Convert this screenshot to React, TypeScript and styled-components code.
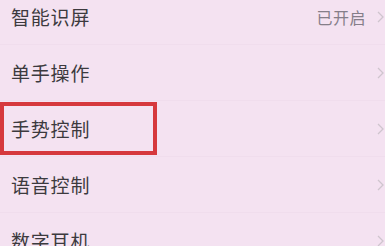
import React from "react";
import styled, { createGlobalStyle } from "styled-components";

const Global = createGlobalStyle`
  html, body { margin: 0; padding: 0; background: #f4e2f1; }
  body { font-family: "Noto Sans CJK SC", "Noto Sans", sans-serif; overflow: hidden; }
`;

const Page = styled.div`
  width: 385px;
  height: 246px;
  overflow: hidden;
  background: #f4e2f1;
`;

const List = styled.ul`
  list-style: none;
  margin: -11px 0 0 0;
  padding: 0;
`;

const Row = styled.li`
  height: 56px;
  display: flex;
  align-items: center;
  padding: 0 0 0 11px;
  box-sizing: border-box;
  border-bottom: 1px solid rgba(210, 190, 210, 0.12);
`;

const Title = styled.span<{ $marked?: boolean }>`
  font-size: 19px;
  color: #3c3a3e;
  letter-spacing: 0.8px;
  display: flex;
  align-items: center;
  box-sizing: border-box;
  ${(p) =>
    p.$marked
      ? `
    margin-left: -11px;
    padding-left: 7px;
    width: 157px;
    height: 53px;
    border: 4px solid #d6383d;
  `
      : ""}
`;

const Right = styled.div`
  margin-left: auto;
  display: flex;
  align-items: center;
  gap: 11px;
  padding-right: 1px;
`;

const Status = styled.span`
  font-size: 16px;
  letter-spacing: 0.5px;
  color: #857e89;
`;

const Chevron = () => (
  <svg width="7" height="12" viewBox="0 0 7 12">
    <path d="M1 1 L6 6 L1 11" fill="none" stroke="#cfc5ce" strokeWidth="1.3" />
  </svg>
);

const items = [
  { title: "智能识屏", status: "已开启" },
  { title: "单手操作" },
  { title: "手势控制", marked: true },
  { title: "语音控制" },
  { title: "数字耳机" },
];

export default function App() {
  return (
    <Page>
      <Global />
      <List>
        {items.map((it) => (
          <Row key={it.title}>
            <Title $marked={it.marked}>{it.title}</Title>
            <Right>
              {it.status && <Status>{it.status}</Status>}
              <Chevron />
            </Right>
          </Row>
        ))}
      </List>
    </Page>
  );
}
